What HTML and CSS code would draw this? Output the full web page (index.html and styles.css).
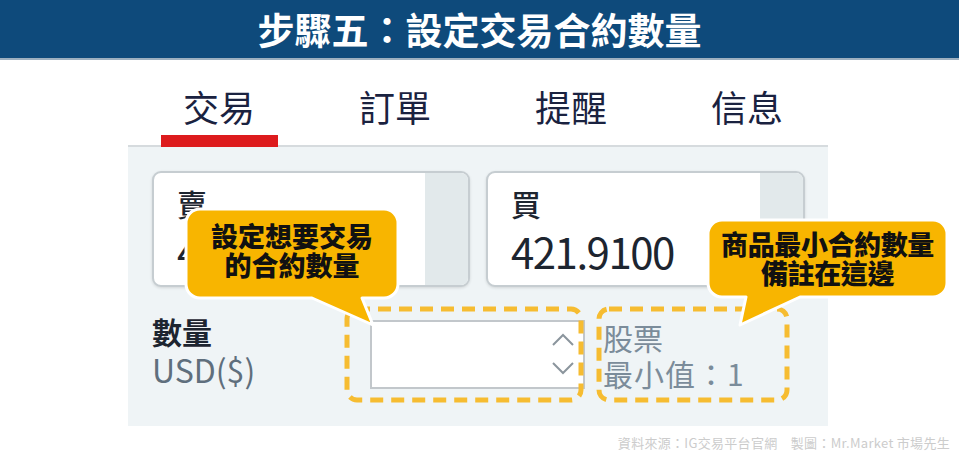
FILE: index.html
```html
<!DOCTYPE html>
<html lang="zh-Hant">
<head>
<meta charset="utf-8">
<title>步驟五：設定交易合約數量</title>
<link rel="stylesheet" href="styles.css">
</head>
<body>
<header class="banner"><h1 class="banner-title">步驟五：設定交易合約數量</h1></header>
<main class="app">
  <nav class="tabs">
    <div class="tab tab-active"><span class="tab-label">交易</span><span class="tab-bar"></span></div>
    <div class="tab"><span class="tab-label">訂單</span></div>
    <div class="tab"><span class="tab-label">提醒</span></div>
    <div class="tab"><span class="tab-label">信息</span></div>
  </nav>
  <section class="panel">
    <div class="quotes">
      <div class="quote">
        <div class="quote-main">
          <div class="quote-label">賣</div>
          <div class="quote-price">421.4100</div>
        </div>
        <div class="quote-side"></div>
      </div>
      <div class="quote">
        <div class="quote-main">
          <div class="quote-label">買</div>
          <div class="quote-price">421.9100</div>
        </div>
        <div class="quote-side"></div>
      </div>
    </div>
    <div class="qty-row">
      <div class="qty-label">
        <div class="qty-title">數量</div>
        <div class="qty-unit">USD($)</div>
      </div>
      <div class="qty-input">
        <svg class="spinner" width="24" height="44" viewBox="0 0 24 44">
          <polyline points="2,12 12,2 22,12" fill="none" stroke="#8b959d" stroke-width="2"/>
          <polyline points="2,30 12,40 22,30" fill="none" stroke="#8b959d" stroke-width="2"/>
        </svg>
      </div>
      <div class="qty-note">
        <div>股票</div>
        <div>最小值：1</div>
      </div>
    </div>
  </section>
</main>
<footer class="credit">資料來源：IG交易平台官網　製圖：Mr.Market 市場先生</footer>

<svg class="annot" width="959" height="455" viewBox="0 0 959 455">
  <rect x="347" y="309" width="234" height="91" rx="10" fill="none" stroke="#f6bc31" stroke-width="5" stroke-dasharray="13 8"/>
  <rect x="599" y="309" width="188" height="91" rx="10" fill="none" stroke="#f6bc31" stroke-width="5" stroke-dasharray="13 8"/>
  <path d="M200,209 H384 A14,14 0 0 1 398,223 V284 A14,14 0 0 1 384,298 H362 L373,325 L312,298 H200 A14,14 0 0 1 186,284 V223 A14,14 0 0 1 200,209 Z" fill="#f8b500" stroke="#ffffff" stroke-width="3" stroke-linejoin="round"/>
  <path d="M722,220 H933 A14,14 0 0 1 947,234 V283 A14,14 0 0 1 933,297 H800 L740,325 L746,297 H722 A14,14 0 0 1 708,283 V234 A14,14 0 0 1 722,220 Z" fill="#f8b500" stroke="#ffffff" stroke-width="3" stroke-linejoin="round"/>
</svg>
<div class="callout callout-a">設定想要交易<br>的合約數量</div>
<div class="callout callout-b">商品最小合約數量<br>備註在這邊</div>
</body>
</html>
```
FILE: styles.css
```css
* { box-sizing: border-box; }
html, body { margin: 0; padding: 0; }
body {
  width: 959px;
  height: 455px;
  overflow: hidden;
  background: #ffffff;
  font-family: "Noto Sans CJK TC", "Noto Sans", sans-serif;
  position: relative;
}
.banner {
  height: 60px;
  background: #0e4a7b;
  border-bottom: 2px solid #9db0c0;
}
.banner-title {
  margin: 0;
  color: #ffffff;
  font-size: 37px;
  font-weight: 700;
  line-height: 58px;
  text-align: center;
}
.app {
  margin-left: 128px;
  width: 700px;
}
.tabs {
  display: grid;
  grid-template-columns: repeat(4, 176px);
  padding-left: 3px;
  padding-top: 26px;
  height: 87px;
  border-bottom: 2px solid #d6dbde;
}
.tab {
  display: flex;
  flex-direction: column;
  align-items: center;
}
.tab-label {
  font-size: 36px;
  line-height: 40px;
  font-weight: 400;
  color: #1a2240;
}
.tab-bar {
  margin-top: 9px;
  width: 117px;
  height: 12px;
  background: #dd1b1d;
}
.panel {
  height: 279px;
  background: #eff4f6;
  padding: 24px 23px 0 24px;
}
.quotes {
  display: flex;
  gap: 16px;
}
.quote {
  width: 318px;
  height: 116px;
  display: flex;
  background: #ffffff;
  border: 2px solid #c6cdd1;
  border-radius: 9px;
  overflow: hidden;
  box-shadow: 0 1px 3px rgba(0, 0, 0, 0.12);
}
.quote + .quote { width: 319px; }
.quote-main {
  flex: 1;
  padding: 12px 0 0 23px;
}
.quote-side {
  width: 43px;
  background: #e2e9eb;
}
.quote-label {
  font-size: 30px;
  line-height: 36px;
  font-weight: 500;
  color: #1d2530;
}
.quote-price {
  margin-top: 5px;
  font-size: 42px;
  line-height: 50px;
  letter-spacing: -1.5px;
  color: #1d2530;
}
.qty-row {
  display: flex;
  margin-top: 25px;
}
.qty-label {
  width: 218px;
}
.qty-title {
  font-size: 30px;
  line-height: 38px;
  font-weight: 700;
  color: #1d2530;
}
.qty-unit {
  font-size: 32px;
  line-height: 38px;
  color: #5f6f7d;
}
.qty-input {
  margin-top: 8px;
  width: 215px;
  height: 69px;
  background: #ffffff;
  border: 2px solid #c2c7cb;
  display: flex;
  justify-content: flex-end;
  align-items: center;
  padding-right: 8px;
}
.spinner { display: block; }
.qty-note {
  margin-top: 7px;
  margin-left: 18px;
  font-size: 30px;
  line-height: 36px;
  color: #7b8c9a;
}
.qty-note div + div { letter-spacing: 1px; }
.credit {
  margin-top: 8px;
  padding-right: 9px;
  text-align: right;
  font-size: 13px;
  line-height: 18px;
  color: #cccccc;
  letter-spacing: 0.3px;
}
.annot {
  position: absolute;
  left: 0;
  top: 0;
  pointer-events: none;
}
.callout {
  position: absolute;
  font-size: 27px;
  line-height: 29px;
  font-weight: 900;
  color: #111111;
  text-align: center;
}
.callout-a {
  left: 186px;
  top: 221px;
  width: 212px;
}
.callout-b {
  left: 708px;
  top: 229px;
  width: 239px;
  letter-spacing: -0.4px;
}
```
